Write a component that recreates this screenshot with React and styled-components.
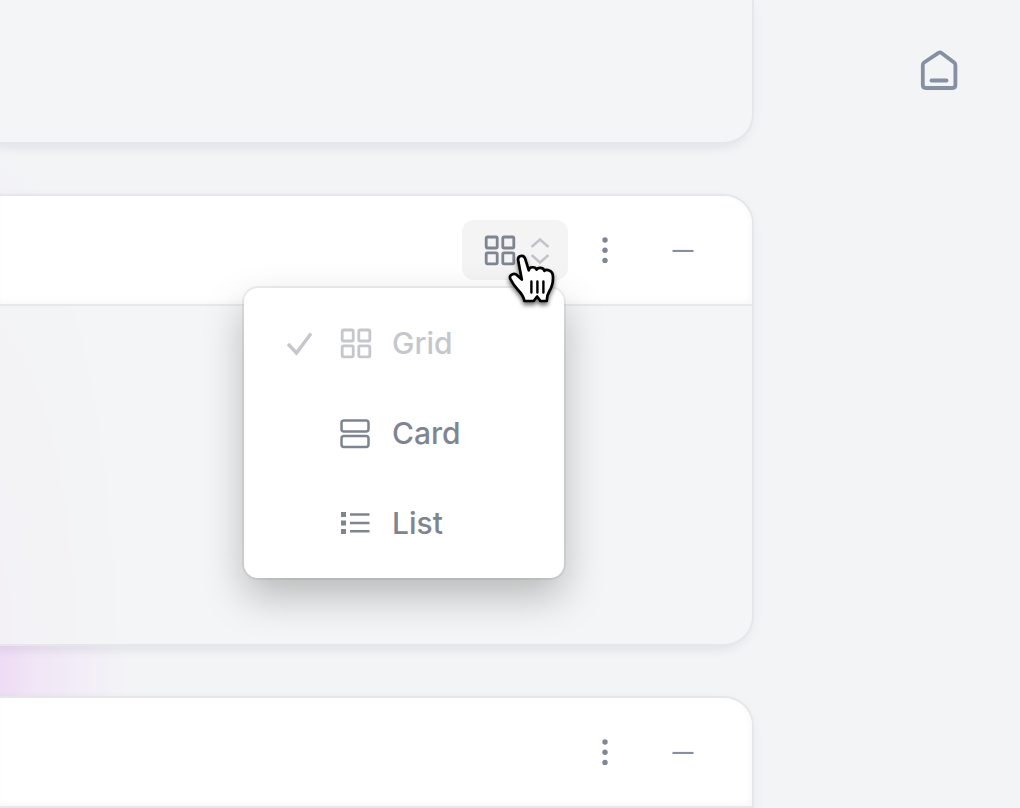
import React, { useState } from "react";
import styled, { createGlobalStyle } from "styled-components";

const GlobalStyle = createGlobalStyle`
  *, *::before, *::after { box-sizing: border-box; }
  body {
    margin: 0;
    background: #f3f4f6;
    color: #7f8590;
    font-family: Inter, "Liberation Sans", sans-serif;
  }
  button { font: inherit; color: inherit; }
`;

const Page = styled.div`
  display: grid;
  grid-template-columns: minmax(0, 1fr) 268px;
  height: 100vh;
  overflow: hidden;
  background: radial-gradient(ellipse 150px 520px at -24px 660px, #edd3f4, rgba(240, 226, 247, 0.75) 40%, rgba(243, 244, 246, 0));
`;

const Main = styled.main`
  display: flex;
  flex-direction: column;
  gap: 54px;
  min-width: 0;
`;

const Card = styled.section`
  flex: none;
  border-radius: 0 ${(p) => (p.$continued ? "0" : "28px")} 28px 0;
  background: rgba(243, 244, 246, 0.85);
  box-shadow: 0 0 0 2px #e6e7ea, -8px 4px 14px rgba(30, 35, 60, 0.06), 0 4px 14px rgba(30, 35, 60, 0.05);
`;

const CardHeader = styled.header`
  display: flex;
  align-items: center;
  justify-content: flex-end;
  gap: 8px;
  height: 110px;
  padding: 0 28px 0 32px;
  border-bottom: 2px solid #e6e8ea;
  border-radius: 0 28px 0 0;
  background: #fff;
  box-shadow: inset -2px -2px 6px rgba(30, 35, 60, 0.03);
`;

const CardBody = styled.div`
  height: ${(p) => p.$height}px;
`;

const IconButton = styled.button`
  display: grid;
  place-items: center;
  width: ${(p) => (p.$wide ? 82 : 58)}px;
  height: 60px;
  padding: 0;
  border: 0;
  border-radius: 12px;
  background: transparent;
`;

const ViewPicker = styled.div`
  position: relative;
`;

const Trigger = styled.button`
  display: flex;
  align-items: center;
  gap: 12px;
  height: 60px;
  padding: 0 16px 0 22px;
  border: 0;
  border-radius: 12px;
  background: #f4f4f5;
`;

const Menu = styled.div`
  position: absolute;
  z-index: 1;
  top: 68px;
  right: 4px;
  display: grid;
  grid-auto-rows: 90px;
  width: 320px;
  padding: 10px 0;
  border-radius: 14px;
  background: #fff;
  box-shadow: 0 0 0 2px rgba(0, 0, 0, 0.06), 0 18px 40px rgba(0, 0, 0, 0.25);
`;

const MenuItem = styled.button`
  display: grid;
  grid-template-columns: 36px 32px 1fr;
  align-items: center;
  column-gap: 20px;
  padding: 0 24px 0 40px;
  border: 0;
  background: transparent;
  color: ${(p) => (p.$selected ? "#c5c7cc" : "#7f8590")};
  font-size: 30px;
  font-weight: 500;
  line-height: 36px;
  text-align: left;
`;

const MenuIcon = styled.span`
  display: grid;
  grid-column: 2;
`;

const Check = styled.svg`
  grid-row: 1;
  grid-column: 1;
`;

const Pointer = styled.svg`
  position: absolute;
  z-index: 2;
  top: 30px;
  left: 44px;
  pointer-events: none;
  filter: drop-shadow(0 3px 2px rgba(0, 0, 0, 0.55));
`;

const Aside = styled.aside`
  display: flex;
  justify-content: center;
  align-items: flex-start;
  padding: 48px 0 0 108px;
`;

const HomeLink = styled.a`
  display: grid;
  color: #8590a0;
`;

const GridIcon = () => (
  <svg width="32" height="32" viewBox="0 0 32 32" fill="none" stroke="currentColor" strokeWidth="2.8" aria-hidden="true">
    <rect x="2.2" y="3" width="11" height="11" rx="1.2" />
    <rect x="18.8" y="3" width="11" height="11" rx="1.2" />
    <rect x="2.2" y="18.8" width="11" height="11" rx="1.2" />
    <rect x="18.8" y="18.8" width="11" height="11" rx="1.2" />
  </svg>
);

const CardIcon = () => (
  <svg width="32" height="32" viewBox="0 0 32 32" fill="none" stroke="currentColor" strokeWidth="2.5" aria-hidden="true">
    <rect x="1.5" y="3.5" width="27" height="11" rx="2.5" />
    <rect x="1.5" y="19" width="27" height="11" rx="2.5" />
  </svg>
);

const ListIcon = () => (
  <svg width="32" height="32" viewBox="0 0 32 32" fill="none" stroke="currentColor" strokeWidth="2.4" aria-hidden="true">
    <path d="M10 7.5h19.5M10 16h19.5M10 24.3h19.5" />
    <path d="M1 7.5h5M1 16h5M1 24.5h5" strokeWidth="5" />
  </svg>
);

const ChevronsIcon = () => (
  <svg width="24" height="32" viewBox="0 0 24 32" fill="none" stroke="#c1c4c9" strokeWidth="2.6" aria-hidden="true">
    <path d="M3.5 13l8.5-7.5 8.5 7.5M3.5 21l8.5 7.5 8.5-7.5" />
  </svg>
);

const DotsIcon = () => (
  <svg width="8" height="32" viewBox="0 0 8 32" fill="#7f8694" aria-hidden="true">
    <circle cx="4" cy="6" r="2.7" />
    <circle cx="4" cy="16.2" r="2.7" />
    <circle cx="4" cy="26.4" r="2.7" />
  </svg>
);

const MinusIcon = () => (
  <svg width="22" height="4" viewBox="0 0 22 4" aria-hidden="true">
    <path d="M0.5 3h21" stroke="#8490a0" strokeWidth="2.2" />
  </svg>
);

const HomeIcon = () => (
  <svg width="44" height="44" viewBox="0 0 44 44" fill="none" stroke="currentColor" strokeWidth="3.8" strokeLinejoin="round" aria-hidden="true">
    <path d="M4.8 37V17.2c0-1.1.4-2 1.3-2.7L20.5 4.9c1.1-.8 2-.8 3 0l12.6 9.6c.9.7 1.3 1.6 1.3 2.7V37c0 2-1 3-3 3H7.8c-2 0-3-1-3-3Z" />
    <path d="M13.5 32.5h15" strokeLinecap="round" />
  </svg>
);

const HandPointer = () => (
  <Pointer width="52" height="58" viewBox="0 0 52 58" aria-hidden="true">
    <path
      d="M12.2 10.6C11.2 5.4 17.6 4 19.2 8.8L22.8 20.3C23.2 16.4 29.3 16.3 30.7 19.6C32.4 16.8 37.6 17.4 38.4 20.9C40.5 18.8 46.3 20.5 46.8 25C47.5 31.5 46.2 36.5 43.4 41C41.7 43.8 40.7 46 40.7 51H34.4L31.1 46.5L27.7 51H18.4C17.7 46 14.6 42.5 11.4 39.2C8.6 36.2 6 32.2 4.3 28.9C2.4 24.6 8.5 22.3 11.4 25.5L15.8 29.6Z"
      fill="#fff"
      stroke="#000"
      strokeWidth="2.7"
      strokeLinejoin="round"
    />
    <path d="M25.4 31.5v11M31.4 31.5v11M37.4 31.5v11" stroke="#000" strokeWidth="2.4" strokeLinecap="round" />
  </Pointer>
);

const views = [
  { label: "Grid", Icon: GridIcon },
  { label: "Card", Icon: CardIcon },
  { label: "List", Icon: ListIcon },
];

const CardActions = () => (
  <>
    <IconButton type="button" aria-label="More options">
      <DotsIcon />
    </IconButton>
    <IconButton type="button" $wide aria-label="Collapse">
      <MinusIcon />
    </IconButton>
  </>
);

export default function App() {
  const [view, setView] = useState("Grid");
  const [open, setOpen] = useState(true);

  return (
    <>
      <GlobalStyle />
      <Page>
        <Main>
          <Card $continued>
            <CardBody $height={142} />
          </Card>
          <Card>
            <CardHeader>
              <ViewPicker>
                <Trigger type="button" aria-label="Change view" aria-expanded={open} onClick={() => setOpen(!open)}>
                  <GridIcon />
                  <ChevronsIcon />
                </Trigger>
                {open && (
                  <Menu role="menu">
                    {views.map(({ label, Icon }) => (
                      <MenuItem
                        key={label}
                        type="button"
                        role="menuitemradio"
                        aria-checked={view === label}
                        $selected={view === label}
                        onClick={() => setView(label)}
                      >
                        {view === label && (
                          <Check width="32" height="32" viewBox="0 0 32 32" fill="none" stroke="currentColor" strokeWidth="3.4" aria-hidden="true">
                            <path d="M4 17l8.5 9L27 6.5" />
                          </Check>
                        )}
                        <MenuIcon>
                          <Icon />
                        </MenuIcon>
                        {label}
                      </MenuItem>
                    ))}
                  </Menu>
                )}
                <HandPointer />
              </ViewPicker>
              <CardActions />
            </CardHeader>
            <CardBody $height={338} />
          </Card>
          <Card>
            <CardHeader>
              <CardActions />
            </CardHeader>
            <CardBody $height={338} />
          </Card>
        </Main>
        <Aside>
          <HomeLink href="#home" aria-label="Home">
            <HomeIcon />
          </HomeLink>
        </Aside>
      </Page>
    </>
  );
}
